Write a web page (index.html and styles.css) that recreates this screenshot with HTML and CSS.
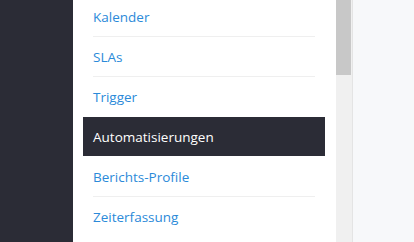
FILE: index.html
```html
<!DOCTYPE html>
<html lang="de">
<head>
<meta charset="utf-8">
<link rel="stylesheet" href="styles.css">
</head>
<body>
<div class="app">
  <aside class="main-nav"></aside>
  <section class="settings">
    <nav class="menu">
      <a class="item" href="#">Kalender</a>
      <a class="item" href="#">SLAs</a>
      <a class="item before-active" href="#">Trigger</a>
      <a class="item active" href="#">Automatisierungen</a>
      <a class="item" href="#">Berichts-Profile</a>
      <a class="item last" href="#">Zeiterfassung</a>
    </nav>
  </section>
  <div class="scrollbar"><div class="thumb"></div></div>
  <main class="content"></main>
</div>
</body>
</html>
```
FILE: styles.css
```css
html, body {
  margin: 0;
  padding: 0;
  height: 100%;
  overflow: hidden;
}
body {
  font-family: "Open Sans", "Noto Sans", sans-serif;
  font-size: 13.5px;
}
.app {
  display: flex;
  height: 242px;
}
.main-nav {
  width: 73px;
  flex: none;
  background: #2b2c36;
}
.settings {
  width: 263px;
  flex: none;
  background: #fff;
  overflow: hidden;
}
.menu {
  display: flex;
  flex-direction: column;
  margin-top: -3px;
  padding: 0 11px 0 10px;
}
.item {
  display: flex;
  align-items: center;
  height: 39px;
  margin: 0 10px;
  border-bottom: 1px solid #efefef;
  color: #2b8ad9;
  text-decoration: none;
}
.item.before-active,
.item.last {
  border-bottom-color: transparent;
}
.item.active {
  margin: 0;
  padding: 0 10px;
  background: #2b2c36;
  color: #fff;
  border-bottom-color: #fff;
}
.scrollbar {
  width: 16px;
  flex: none;
  background: #f0f0f0;
  border-right: 1px solid #e4e4e4;
}
.thumb {
  width: 15px;
  height: 75px;
  background: #c8c8c8;
}
.content {
  flex: 1;
  background: #f7f8fa;
}
```
